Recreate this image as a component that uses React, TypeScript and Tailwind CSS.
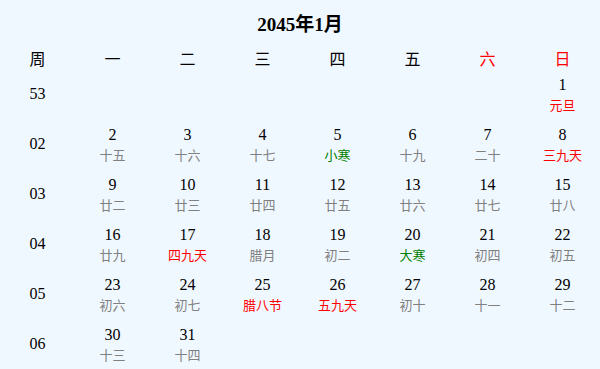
import React from "react";

type Day = { d: number; l: string; c?: "red" | "green" };

const weeks: { w: string; days: (Day | null)[] }[] = [
  { w: "53", days: [null, null, null, null, null, null, { d: 1, l: "元旦", c: "red" }] },
  {
    w: "02",
    days: [
      { d: 2, l: "十五" },
      { d: 3, l: "十六" },
      { d: 4, l: "十七" },
      { d: 5, l: "小寒", c: "green" },
      { d: 6, l: "十九" },
      { d: 7, l: "二十" },
      { d: 8, l: "三九天", c: "red" },
    ],
  },
  {
    w: "03",
    days: [
      { d: 9, l: "廿二" },
      { d: 10, l: "廿三" },
      { d: 11, l: "廿四" },
      { d: 12, l: "廿五" },
      { d: 13, l: "廿六" },
      { d: 14, l: "廿七" },
      { d: 15, l: "廿八" },
    ],
  },
  {
    w: "04",
    days: [
      { d: 16, l: "廿九" },
      { d: 17, l: "四九天", c: "red" },
      { d: 18, l: "腊月" },
      { d: 19, l: "初二" },
      { d: 20, l: "大寒", c: "green" },
      { d: 21, l: "初四" },
      { d: 22, l: "初五" },
    ],
  },
  {
    w: "05",
    days: [
      { d: 23, l: "初六" },
      { d: 24, l: "初七" },
      { d: 25, l: "腊八节", c: "red" },
      { d: 26, l: "五九天", c: "red" },
      { d: 27, l: "初十" },
      { d: 28, l: "十一" },
      { d: 29, l: "十二" },
    ],
  },
  {
    w: "06",
    days: [{ d: 30, l: "十三" }, { d: 31, l: "十四" }, null, null, null, null, null],
  },
];

const heads = ["周", "一", "二", "三", "四", "五", "六", "日"];

export default function App() {
  return (
    <div
      className="w-[600px] h-[369px] bg-[#f0f8ff] text-black overflow-hidden"
      style={{ fontFamily: '"Liberation Serif", "Noto Sans CJK SC", serif' }}
    >
      <div className="h-[50px] flex items-center justify-center text-[19px] font-bold leading-6">
        2045年1月
      </div>
      <div className="grid grid-cols-8 h-[19px] items-center text-[16px] leading-5">
        {heads.map((h, i) => (
          <div key={h} className={"text-center " + (i >= 6 ? "text-[#ff0000]" : "")}>
            {h}
          </div>
        ))}
      </div>
      {weeks.map((wk) => (
        <div key={wk.w} className="grid grid-cols-8 h-[50px]">
          <div className="flex items-center justify-center text-[16px]">{wk.w}</div>
          {wk.days.map((day, i) => (
            <div key={i} className="flex flex-col items-center pt-[6px]">
              {day && (
                <>
                  <div className="text-[16px] leading-5">{day.d}</div>
                  <div
                    className={
                      "text-[13px] leading-[21px] " +
                      (day.c === "red"
                        ? "text-[#ff0000]"
                        : day.c === "green"
                        ? "text-[#008000]"
                        : "text-[#808080]")
                    }
                  >
                    {day.l}
                  </div>
                </>
              )}
            </div>
          ))}
        </div>
      ))}
    </div>
  );
}
